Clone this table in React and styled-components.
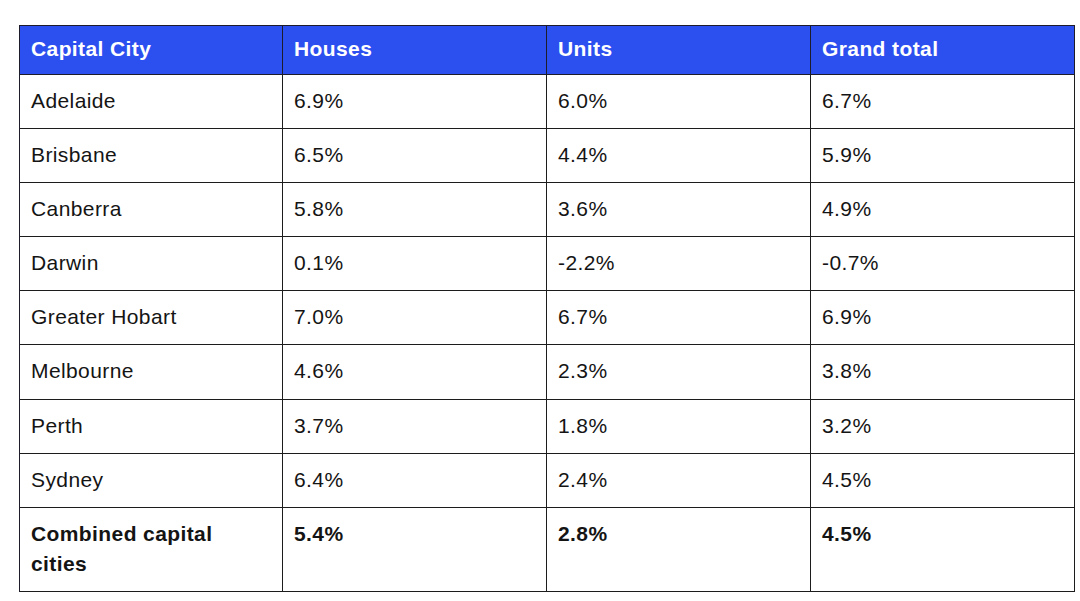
import React from "react";
import styled, { createGlobalStyle } from "styled-components";

const Global = createGlobalStyle`
  html, body { margin: 0; padding: 0; background: #ffffff; }
  body { font-family: "Liberation Sans", Arial, sans-serif; }
`;

const Page = styled.div`
  padding: 25px 0 0 19px;
`;

const Table = styled.div`
  width: 1056px;
  display: grid;
  grid-template-columns: 263px 264px 264px 1fr;
  border-top: 1px solid #1c1c2a;
  border-left: 1px solid #1c1c2a;
  box-sizing: border-box;
`;

const HeadCell = styled.div`
  background: #2c4ff0;
  color: #ffffff;
  font-weight: 700;
  font-size: 21px;
  letter-spacing: 0.4px;
  line-height: 30px;
  padding: 8px 12px 10px 11px;
  border-right: 1px solid #1c1c2a;
  border-bottom: 1px solid #1c1c2a;
`;

const Cell = styled.div`
  color: #141414;
  font-size: 21px;
  letter-spacing: 0.4px;
  line-height: 30px;
  font-weight: ${(p) => (p.$bold ? 700 : 400)};
  padding: 11px 12px 12.1px 11px;
  border-right: 1px solid #1c1c1c;
  border-bottom: 1px solid #1c1c1c;
  background: #ffffff;
`;

const headers = ["Capital City", "Houses", "Units", "Grand total"];
const rows = [
  ["Adelaide", "6.9%", "6.0%", "6.7%"],
  ["Brisbane", "6.5%", "4.4%", "5.9%"],
  ["Canberra", "5.8%", "3.6%", "4.9%"],
  ["Darwin", "0.1%", "-2.2%", "-0.7%"],
  ["Greater Hobart", "7.0%", "6.7%", "6.9%"],
  ["Melbourne", "4.6%", "2.3%", "3.8%"],
  ["Perth", "3.7%", "1.8%", "3.2%"],
  ["Sydney", "6.4%", "2.4%", "4.5%"],
];
const total = ["Combined capital cities", "5.4%", "2.8%", "4.5%"];

export default function App() {
  return (
    <>
      <Global />
      <Page>
        <Table>
          {headers.map((h) => (
            <HeadCell key={h}>{h}</HeadCell>
          ))}
          {rows.map((r) =>
            r.map((c, i) => <Cell key={r[0] + i}>{c}</Cell>)
          )}
          {total.map((c, i) => (
            <Cell key={"t" + i} $bold>
              {i === 0 ? (
                <>
                  Combined capital
                  <br />
                  cities
                </>
              ) : (
                c
              )}
            </Cell>
          ))}
        </Table>
      </Page>
    </>
  );
}
